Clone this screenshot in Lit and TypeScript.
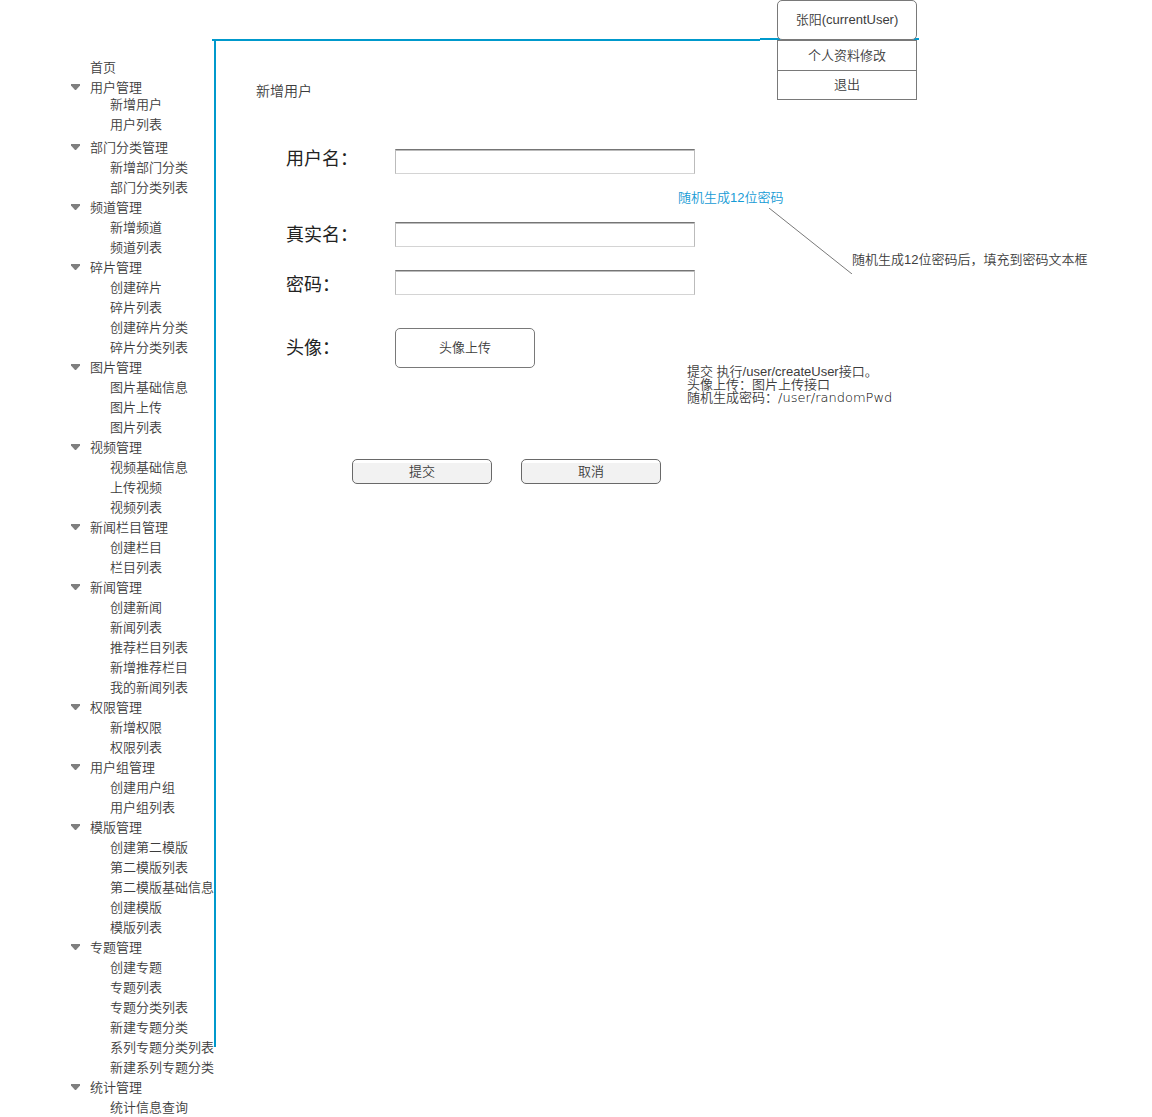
import { LitElement, html, css } from "lit";
import { customElement } from "lit/decorators.js";

interface Group {
  title: string;
  items: string[];
}

const GROUPS: Group[] = [
  { title: "用户管理", items: ["新增用户", "用户列表"] },
  { title: "部门分类管理", items: ["新增部门分类", "部门分类列表"] },
  { title: "频道管理", items: ["新增频道", "频道列表"] },
  { title: "碎片管理", items: ["创建碎片", "碎片列表", "创建碎片分类", "碎片分类列表"] },
  { title: "图片管理", items: ["图片基础信息", "图片上传", "图片列表"] },
  { title: "视频管理", items: ["视频基础信息", "上传视频", "视频列表"] },
  { title: "新闻栏目管理", items: ["创建栏目", "栏目列表"] },
  { title: "新闻管理", items: ["创建新闻", "新闻列表", "推荐栏目列表", "新增推荐栏目", "我的新闻列表"] },
  { title: "权限管理", items: ["新增权限", "权限列表"] },
  { title: "用户组管理", items: ["创建用户组", "用户组列表"] },
  { title: "模版管理", items: ["创建第二模版", "第二模版列表", "第二模版基础信息", "创建模版", "模版列表"] },
  {
    title: "专题管理",
    items: ["创建专题", "专题列表", "专题分类列表", "新建专题分类", "系列专题分类列表", "新建系列专题分类"],
  },
  { title: "统计管理", items: ["统计信息查询"] },
];

@customElement("side-nav")
export class SideNav extends LitElement {
  static styles = css`
    :host {
      display: block;
      white-space: nowrap;
    }
    ul {
      list-style: none;
      margin: 0;
      padding: 0;
    }
    a {
      color: inherit;
      text-decoration: none;
    }
    .row {
      display: flex;
      align-items: center;
      height: 20px;
    }
    .arrow {
      width: 10px;
      height: 8px;
      margin-right: 10px;
      fill: #7f7f7f;
    }
    .home {
      padding-left: 20px;
    }
    .children {
      padding-left: 40px;
    }
    .group:first-of-type .children {
      margin: -3px 0 3px;
    }
  `;

  render() {
    return html`
      <nav lang="zh-CN">
        <a class="row home" href="#">首页</a>
        ${GROUPS.map(
          (g) => html`
            <section class="group">
              <a class="row" href="#">
                <svg class="arrow" viewBox="0 0 10 8" aria-hidden="true"><path d="M1 0H10V1.500L6 6H5L1 1.500Z" /></svg>${g.title}
              </a>
              <ul class="children">
                ${g.items.map((t) => html`<li><a class="row" href="#">${t}</a></li>`)}
              </ul>
            </section>
          `
        )}
      </nav>
    `;
  }
}

@customElement("app-root")
export class AppRoot extends LitElement {
  static styles = css`
    :host {
      display: block;
      background: #fff;
      color: #3c3c3c;
      font: 350 13px/20px "Liberation Sans", "Noto Sans CJK SC", sans-serif;
    }
    .header {
      display: flex;
      height: 41px;
      padding: 0 233px 0 212px;
    }
    .bar {
      flex: 1;
      margin-top: 39px;
      background: #0099cc;
    }
    .account {
      position: relative;
      width: 159px;
      margin: 38px 0 1px;
      background: #0099cc;
    }
    .menu {
      position: absolute;
      right: 2px;
      bottom: -60px;
      width: 140px;
    }
    .menu button {
      display: block;
      box-sizing: border-box;
      width: 100%;
      height: 29px;
      padding: 0;
      background: #fff;
      border: 1px solid #797979;
      border-top: 0;
      color: inherit;
      font: inherit;
    }
    .menu .current {
      height: 40px;
      border: 1px solid #797979;
      border-radius: 5px;
    }
    .menu .first {
      height: 31px;
      border-top: 1px solid #797979;
    }
    .body {
      display: flex;
    }
    side-nav {
      box-sizing: border-box;
      width: 214px;
      flex: none;
      padding: 17px 0 0 70px;
    }
    main {
      display: flex;
      flex: 1;
      min-width: 0;
      margin-bottom: 71px;
      padding: 40px 40px 0;
      border-left: 2px solid #0099cc;
    }
    form {
      flex: none;
      width: 439px;
    }
    h1 {
      margin: 0;
      font-size: 14px;
      font-weight: 350;
      line-height: 20px;
    }
    .field {
      display: flex;
      align-items: center;
      margin-top: 48px;
      padding-left: 30px;
    }
    .field.start {
      align-items: flex-start;
    }
    .field.end {
      align-items: flex-end;
      margin-top: 23px;
    }
    .field.upload {
      margin-top: 33px;
    }
    label {
      width: 109px;
      color: #222;
      font-size: 18px;
      font-weight: 400;
      line-height: 20px;
    }
    input {
      flex: 1;
      box-sizing: border-box;
      min-width: 0;
      height: 25px;
      padding: 0 4px;
      background: #fff;
      border: 1px solid #bbb;
      border-top-color: #757575;
      border-bottom-color: #d4d4d4;
      border-radius: 0;
      box-shadow: inset 0 1px #bbb;
      font: inherit;
      outline: none;
    }
    .btn {
      box-sizing: border-box;
      width: 140px;
      height: 25px;
      padding: 0;
      background: linear-gradient(#fff 3px, #f2f2f2 3px);
      border: 1px solid #696969;
      border-radius: 5px;
      color: inherit;
      font: inherit;
    }
    .btn.file {
      height: 40px;
      background: #fff;
      border-color: #797979;
    }
    .actions {
      display: flex;
      gap: 29px;
      margin-top: 91px;
      padding-left: 96px;
    }
    .notes {
      flex: 1;
      min-width: 0;
      margin-left: -17px;
      padding-top: 107px;
    }
    .generate {
      display: block;
      width: max-content;
      color: #169bd5;
      text-decoration: none;
    }
    .callout {
      display: flex;
      align-items: flex-end;
      padding-left: 91px;
    }
    .callout svg {
      flex: none;
      width: 83px;
      height: 66px;
      stroke: #797979;
    }
    .callout p {
      margin: 0 -40px 4px 0;
      white-space: nowrap;
    }
    .api {
      margin: 91px 0 0;
      padding-left: 9px;
      line-height: 13px;
    }
    .path {
      color: #000;
      font-family: "DejaVu Sans", sans-serif;
      font-weight: 200;
    }
  `;

  render() {
    return html`
      <header class="header" lang="zh-CN">
        <div class="bar"></div>
        <div class="account">
          <div class="menu">
            <button class="current">张阳(currentUser)</button>
            <button class="first">个人资料修改</button>
            <button>退出</button>
          </div>
        </div>
      </header>
      <div class="body" lang="zh-CN">
        <side-nav></side-nav>
        <main>
          <form @submit=${(e: Event) => e.preventDefault()}>
            <h1>新增用户</h1>
            <div class="field start"><label for="username">用户名：</label><input id="username" /></div>
            <div class="field"><label for="realname">真实名：</label><input id="realname" /></div>
            <div class="field end"><label for="password">密码：</label><input id="password" type="password" /></div>
            <div class="field upload">
              <label for="avatar">头像：</label><button class="btn file" id="avatar" type="button">头像上传</button>
            </div>
            <div class="actions">
              <button class="btn" type="submit">提交</button>
              <button class="btn" type="button">取消</button>
            </div>
          </form>
          <div class="notes">
            <a class="generate" href="#">随机生成12位密码</a>
            <div class="callout">
              <svg viewBox="0 0 83 66" aria-hidden="true"><path d="M0 0L83 66" /></svg>
              <p>随机生成12位密码后，填充到密码文本框</p>
            </div>
            <p class="api">
              提交 执行/user/createUser接口。<br />头像上传：图片上传接口<br />随机生成密码：<span class="path">/user/randomPwd</span>
            </p>
          </div>
        </main>
      </div>
    `;
  }
}
